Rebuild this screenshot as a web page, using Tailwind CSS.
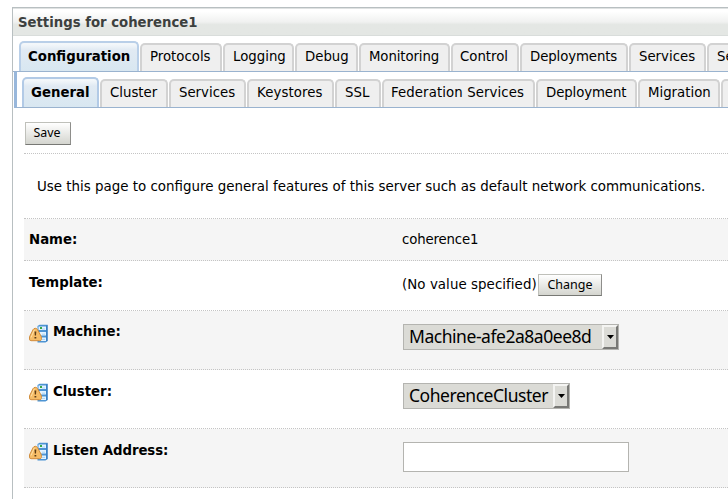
<!DOCTYPE html>
<html lang="en">
<head>
<meta charset="utf-8">
<title>Settings for coherence1</title>
<script src="https://cdn.jsdelivr.net/npm/@tailwindcss/browser@4"></script>
</head>
<body class="h-[499px] w-[728px] overflow-hidden bg-white pt-[7px] pl-3 font-['DejaVu_Sans',Verdana,sans-serif] text-[13.3px] leading-4 text-black">
<svg class="hidden">
  <symbol id="restart" viewBox="0 0 20 19">
    <path d="M8.5 2 L10.5 .7 H18.5 V17 L16.5 18.4 H8.5Z" fill="#4d94d3"/>
    <path d="M9.5 2.5h7.5v3.5h-7.5zM9.5 8h7.5v3.5h-7.5zM9.5 13.5h7.5v3.5h-7.5z" fill="#e4f3ff"/>
    <path d="M17.5 1.5l1-.8V17l-1 .8z" fill="#236db5"/>
    <path d="M13 5h3M13 10.2h3M13 15.4h3" stroke="#a9d5f5"/>
    <path d="M11 3h2v2h-2z" fill="#38a843"/>
    <path d="M6.3 4.3Q7.8 4.3 8.5 5.6L12.1 12.3Q13.3 16.7 10.8 16.7H2Q-.5 16.7.5 12.8L4.1 5.6Q4.8 4.3 6.3 4.3Z" fill="#f6bd67" stroke="#d08c3c"/>
    <path d="M5.3 6L2 13.5" stroke="#ffe1a5" fill="none"/>
    <path d="M5.5 7.5h1.8l-.3 4.1H5.8zM5.5 13h1.8v1.6H5.5z" fill="#5c3c14"/>
  </symbol>
</svg>
<main class="h-[492px] w-[716px] overflow-hidden border-t border-l border-[#b8bfc1]">
  <h1 class="h-[28px] border-t border-b border-t-[#dfe2e2] border-b-[#d9dddb] bg-linear-to-b from-white from-10% via-[#f0f1f0] via-50% to-[#e4e7e4] to-60% pt-[6px] pl-[5px] font-bold text-[13.25px] text-[#3c403e]">Settings for coherence1</h1>

  <nav class="flex h-[36px] items-end border-b border-[#9ab3cf] pl-[6px] whitespace-nowrap">
    <div class="mr-px h-[30px] w-[120px] shrink-0 rounded-t-[5px] border-2 border-b-0 border-[#b9cfe8] bg-linear-to-b from-[#f3f7fa] from-5% via-[#e1eaf3] via-25% to-[#d8e7f1] pt-[6px] pl-[7px] font-bold">Configuration</div>
    <div class="mr-px h-[28px] w-[82px] shrink-0 rounded-t-[5px] border-2 border-b-0 border-[#d2d2d2] bg-[#efefef] pt-[4px] pl-2">Protocols</div>
    <div class="mr-px h-[28px] w-[71px] shrink-0 rounded-t-[5px] border-2 border-b-0 border-[#d2d2d2] bg-[#efefef] pt-[4px] pl-2">Logging</div>
    <div class="mr-px h-[28px] w-[63px] shrink-0 rounded-t-[5px] border-2 border-b-0 border-[#d2d2d2] bg-[#efefef] pt-[4px] pl-2">Debug</div>
    <div class="mr-px h-[28px] w-[91px] shrink-0 rounded-t-[5px] border-2 border-b-0 border-[#d2d2d2] bg-[#efefef] pt-[4px] pl-2 tracking-[-0.1px]">Monitoring</div>
    <div class="mr-px h-[28px] w-[68px] shrink-0 rounded-t-[5px] border-2 border-b-0 border-[#d2d2d2] bg-[#efefef] pt-[4px] pl-[7px]">Control</div>
    <div class="mr-px h-[28px] w-[108px] shrink-0 rounded-t-[5px] border-2 border-b-0 border-[#d2d2d2] bg-[#efefef] pt-[4px] pl-2 tracking-[-0.1px]">Deployments</div>
    <div class="mr-px h-[28px] w-[77px] shrink-0 rounded-t-[5px] border-2 border-b-0 border-[#d2d2d2] bg-[#efefef] pt-[4px] pl-2">Services</div>
    <div class="h-[28px] w-[80px] shrink-0 rounded-t-[5px] border-2 border-b-0 border-[#d2d2d2] bg-[#efefef] pt-[4px] pl-2">Security</div>
  </nav>

  <nav class="ml-px flex h-[36px] items-end border-b border-l-[3px] border-[#9ab3cf] border-l-[#98b7db] pl-[5px] whitespace-nowrap">
    <div class="mr-px h-[30px] w-[77px] shrink-0 rounded-t-[5px] border-2 border-b-0 border-[#b2cae6] bg-linear-to-b from-[#f3f7fa] from-5% via-[#e1eaf3] via-25% to-[#d8e7f1] pt-[6px] pl-[7px] font-bold">General</div>
    <div class="mr-px h-[28px] w-[68px] shrink-0 rounded-t-[5px] border-2 border-b-0 border-[#d2d2d2] bg-[#efefef] pt-[4px] pl-2">Cluster</div>
    <div class="mr-px h-[28px] w-[77px] shrink-0 rounded-t-[5px] border-2 border-b-0 border-[#d2d2d2] bg-[#efefef] pt-[4px] pl-2">Services</div>
    <div class="mr-px h-[28px] w-[87px] shrink-0 rounded-t-[5px] border-2 border-b-0 border-[#d2d2d2] bg-[#efefef] pt-[4px] pl-2 tracking-[0.1px]">Keystores</div>
    <div class="mr-px h-[28px] w-[46px] shrink-0 rounded-t-[5px] border-2 border-b-0 border-[#d2d2d2] bg-[#efefef] pt-[4px] pl-2">SSL</div>
    <div class="mr-px h-[28px] w-[153px] shrink-0 rounded-t-[5px] border-2 border-b-0 border-[#d2d2d2] bg-[#efefef] pt-[4px] pl-[7px] tracking-[0.1px]">Federation Services</div>
    <div class="mr-px h-[28px] w-[101px] shrink-0 rounded-t-[5px] border-2 border-b-0 border-[#d2d2d2] bg-[#efefef] pt-[4px] pl-2 tracking-[-0.1px]">Deployment</div>
    <div class="mr-px h-[28px] w-[82px] shrink-0 rounded-t-[5px] border-2 border-b-0 border-[#d2d2d2] bg-[#efefef] pt-[4px] pl-2">Migration</div>
    <div class="h-[28px] w-[40px] shrink-0 rounded-t-[5px] border-2 border-b-0 border-[#d2d2d2] bg-[#efefef]"></div>
  </nav>

  <section class="pl-[11px]">
    <div class="h-[46px] border-b border-dotted border-[#c4c4c4] pt-[14px] pl-px">
      <button class="block h-[23px] w-[46px] border border-[#bfc0ba] border-r-[#8e8e8b] border-b-[#777874] bg-linear-to-b from-white to-[#d4d5cf] pr-[2px] pb-px font-['Noto_Sans',sans-serif] text-[12.4px] leading-5">Save</button>
    </div>
    <p class="h-[65px] border-b border-dotted border-[#c4c4c4] pt-[25px] pl-[13px] text-[13.42px] whitespace-nowrap">Use this page to configure general features of this server such as default network communications.</p>
    <div class="flex h-[42px] border-b border-dotted border-[#c4c4c4] bg-[#f5f5f5] pl-[5px]">
      <div class="w-[373px] pt-[13px] font-bold">Name:</div>
      <div class="pt-[13px] text-[13.3px] tracking-[-0.15px]">coherence1</div>
    </div>
    <div class="flex h-[50px] border-b border-dotted border-[#c4c4c4] pl-[5px]">
      <div class="w-[373px] pt-[14px] font-bold">Template:</div>
      <div class="w-[136px] pt-[16px] text-[13.4px] tracking-[0.05px] whitespace-nowrap">(No value specified)</div>
      <button class="mt-[13px] h-[22px] w-[64px] border border-[#bfc0ba] border-r-[#8e8e8b] border-b-[#777874] bg-linear-to-b from-white to-[#d4d5cf] font-['Noto_Sans',sans-serif] text-[12.5px] leading-5">Change</button>
    </div>
    <div class="flex h-[59px] border-b border-dotted border-[#c4c4c4] bg-[#f5f5f5] pl-[5px]">
      <div class="flex w-[374px] pt-[13px] font-bold"><svg class="mr-1 h-[19px] w-5"><use href="#restart"/></svg>Machine:</div>
      <div class="mt-[13px] flex h-[26px] w-[216px] border border-[#b4b4b0] bg-[#dbdbd6] pl-[5px] font-['Noto_Sans',sans-serif] text-[17.5px] leading-[23px] tracking-[-0.46px]"><span class="flex-1">Machine-afe2a8a0ee8d</span><span class="flex h-6 w-4 items-center justify-center border-2 border-t-[#f4f4f2] border-r-[#787875] border-b-[#787875] border-l-[#f4f4f2]"><svg class="h-1 w-[7px]"><path d="M0 0h7L3.5 4z"/></svg></span></div>
    </div>
    <div class="flex h-[59px] border-b border-dotted border-[#c4c4c4] pl-[5px]">
      <div class="flex w-[374px] pt-[14px] font-bold"><svg class="-mt-px mr-1 h-[19px] w-5"><use href="#restart"/></svg>Cluster:</div>
      <div class="mt-[13px] flex h-[26px] w-[167px] border border-[#b4b4b0] bg-[#dbdbd6] pl-[5px] font-['Noto_Sans',sans-serif] text-[17.5px] leading-[23px] tracking-[-0.46px]"><span class="flex-1">CoherenceCluster</span><span class="flex h-6 w-4 items-center justify-center border-2 border-t-[#f4f4f2] border-r-[#787875] border-b-[#787875] border-l-[#f4f4f2]"><svg class="h-1 w-[7px]"><path d="M0 0h7L3.5 4z"/></svg></span></div>
    </div>
    <div class="flex h-[59px] border-b border-dotted border-[#c4c4c4] bg-[#f5f5f5] pl-[5px]">
      <div class="flex w-[374px] pt-[14px] font-bold tracking-[-0.08px]"><svg class="-mt-px mr-1 h-[19px] w-5"><use href="#restart"/></svg>Listen Address:</div>
      <input aria-label="Listen Address" class="mt-[13px] h-[30px] w-[226px] border border-[#b4b4b0] bg-white">
    </div>
  </section>
</main>
</body>
</html>
